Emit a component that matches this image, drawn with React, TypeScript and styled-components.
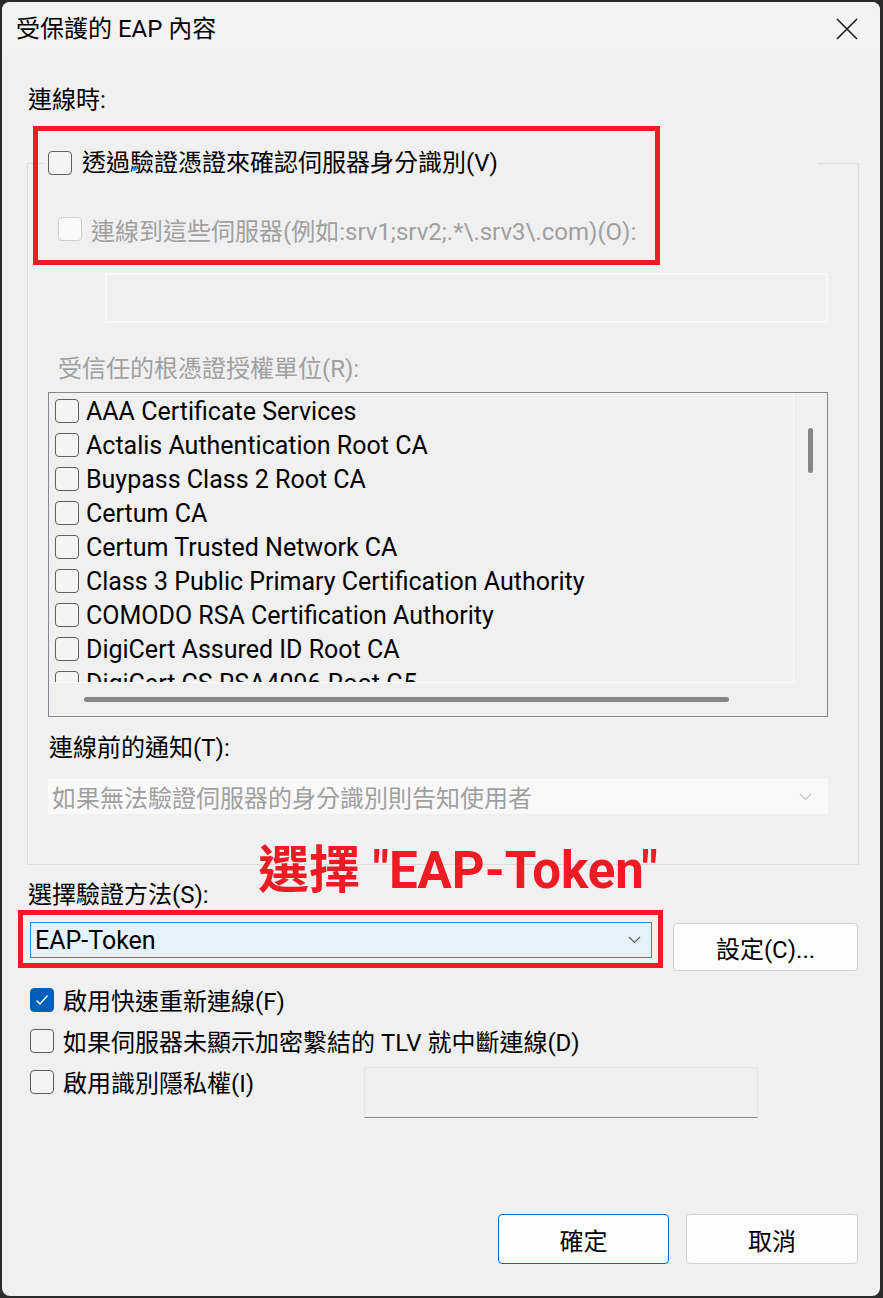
import React, { FC } from 'react'
import styled, { createGlobalStyle } from 'styled-components'

const GlobalStyle = createGlobalStyle`
    html, body {
        margin: 0;
        padding: 0;
        background: #2b2b2b;
    }
    * {
        box-sizing: border-box;
    }
`

const Frame = styled.div`
    position: relative;
    width: 883px;
    height: 1298px;
    padding: 2px 3px 2px 2px;
    background: #2b2b2b;
    font-family: Roboto, "Noto Sans CJK TC", sans-serif;
    font-size: 24px;
    color: #000;
`

const Window = styled.div`
    height: 100%;
    border-radius: 8px;
    background: #f0f0f0;
    overflow: hidden;
    display: flex;
    flex-direction: column;
`

const TitleBar = styled.div`
    flex: none;
    height: 53px;
    display: flex;
    align-items: center;
    justify-content: space-between;
    padding: 0 22px 0 14px;
    background: #f3f3f3;
`

const Title = styled.div`
    line-height: 34px;
`

const Body = styled.div`
    display: flex;
    flex-direction: column;
    padding: 0 21px 0 25px;
`

const Label = styled.div<{ $top?: number; $indent?: number; $disabled?: boolean }>`
    line-height: 34px;
    margin-top: ${p => p.$top ?? 0}px;
    padding-left: ${p => p.$indent ?? 0}px;
    color: ${p => (p.$disabled ? '#a0a0a0' : '#000')};
    white-space: nowrap;
`

const Group = styled.fieldset`
    margin: 32px 0 0;
    padding: 0 30px 50px 20px;
    border: 1px solid #dcdcdc;
    min-width: 0;
    display: flex;
    flex-direction: column;
`

const Legend = styled.legend`
    width: 773px;
    height: 28px;
    margin-left: -3px;
    padding: 0 3px;
    display: flex;
    align-items: center;
    gap: 10px;
    line-height: 28px;
    white-space: nowrap;
`

type BoxState = 'off' | 'on' | 'disabled'

const Box = styled.span<{ $state: BoxState }>`
    flex: none;
    width: 24px;
    height: 24px;
    border-radius: 4px;
    display: flex;
    align-items: center;
    justify-content: center;
    border: 1.5px solid ${p => (p.$state === 'on' ? '#005fb8' : p.$state === 'disabled' ? '#cdcdcd' : '#5f5f5f')};
    background: ${p => (p.$state === 'on' ? '#005fb8' : p.$state === 'disabled' ? '#fafafa' : '#f4f4f4')};
`

const CheckRow = styled.div<{ $height?: number; $gap?: number; $indent?: number; $top?: number; $disabled?: boolean }>`
    display: flex;
    align-items: center;
    height: ${p => p.$height ?? 34}px;
    gap: ${p => p.$gap ?? 9}px;
    margin-top: ${p => p.$top ?? 0}px;
    margin-left: ${p => p.$indent ?? 0}px;
    color: ${p => (p.$disabled ? '#a0a0a0' : '#000')};
    white-space: nowrap;
`

const ServerField = styled.div`
    margin: 27px 0 0 57px;
    height: 50px;
    border: 2px solid #f9f9f9;
    background: #f0f0f0;
`

const ListBox = styled.div`
    margin-top: 6px;
    height: 325px;
    border: 1px solid #828790;
    display: grid;
    grid-template-columns: 1fr 34px;
    grid-template-rows: 1fr 34px;
`

const Items = styled.div`
    overflow: hidden;
    padding: 1px 0 0 6px;
`

const ItemRow = styled.div`
    height: 34px;
    display: flex;
    align-items: center;
    gap: 7px;
    font-size: 25px;
    white-space: nowrap;
`

const VTrack = styled.div`
    border-left: 1px solid #fbfbfb;
    padding: 35px 0 0 14px;
`

const VThumb = styled.div`
    width: 5px;
    height: 45px;
    border-radius: 3px;
    background: #868686;
`

const HTrack = styled.div`
    border-top: 1px solid #fbfbfb;
    padding: 14px 0 0 35px;
`

const HThumb = styled.div`
    width: 645px;
    height: 5px;
    border-radius: 3px;
    background: #868686;
`

const Combo = styled.div<{ $active?: boolean }>`
    display: flex;
    align-items: center;
    justify-content: space-between;
    white-space: nowrap;
    ${p =>
        p.$active
            ? `
        width: 622px;
        height: 36px;
        padding: 0 10px 0 4px;
        border: 1px solid #2b87d9;
        background: #e5f1fb;
        font-size: 25px;
        color: #000;
    `
            : `
        margin-top: 14px;
        height: 35px;
        padding: 0 16px 0 4px;
        background: #f9f9f9;
        color: #a0a0a0;
    `}
`

const MethodRow = styled.div`
    margin: 10px 0 0 3px;
    display: flex;
    align-items: flex-start;
    gap: 21px;
`

const Button = styled.div<{ $primary?: boolean; $width: number; $height: number; $top?: number }>`
    flex: none;
    width: ${p => p.$width}px;
    height: ${p => p.$height}px;
    margin-top: ${p => p.$top ?? 0}px;
    display: flex;
    align-items: center;
    justify-content: center;
    border-radius: 4px;
    border: 1px solid ${p => (p.$primary ? '#0067c0' : '#d0d0d0')};
    background: #fdfdfd;
`

const Options = styled.div`
    margin: 8px 0 0 3px;
    display: flex;
    flex-direction: column;
`

const PrivacyRow = styled.div`
    display: grid;
    grid-template-columns: 334px 394px;
    align-items: start;
`

const PrivacyField = styled.div`
    margin-top: 6px;
    height: 51px;
    border: 1px solid #e4e4e4;
    border-bottom-color: #8a8a8a;
    background: #efefef;
`

const Footer = styled.div`
    margin-top: 96px;
    padding-right: 1px;
    display: flex;
    justify-content: flex-end;
    gap: 17px;
`

const Highlight = styled.div<{ $x: number; $y: number; $w: number; $h: number }>`
    position: absolute;
    left: ${p => p.$x}px;
    top: ${p => p.$y}px;
    width: ${p => p.$w}px;
    height: ${p => p.$h}px;
    border: 5px solid #ed1c24;
    pointer-events: none;
`

const Callout = styled.div`
    position: absolute;
    left: 258px;
    top: 845px;
    font-size: 51px;
    line-height: 51px;
    font-weight: bold;
    color: #ed1c24;
    white-space: nowrap;
`

const CloseIcon: FC = () => (
    <svg width="22" height="22" viewBox="0 0 22 22">
        <path d="M1 1 L21 21 M21 1 L1 21" stroke="#1b1b1b" strokeWidth="1.6" fill="none" />
    </svg>
)

const Chevron: FC<{ color: string }> = ({ color }) => (
    <svg width="13" height="8" viewBox="0 0 13 8">
        <path d="M1 1 L6.5 6.5 L12 1" stroke={color} strokeWidth="1.2" fill="none" />
    </svg>
)

const Check: FC<{ state?: BoxState }> = ({ state = 'off' }) => (
    <Box $state={state}>
        {state === 'on' && (
            <svg width="14" height="12" viewBox="0 0 14 12">
                <path d="M1.5 6.5 L5 10 L12.5 1.5" stroke="#fff" strokeWidth="1.4" fill="none" />
            </svg>
        )}
    </Box>
)

const authorities = [
    'AAA Certificate Services',
    'Actalis Authentication Root CA',
    'Buypass Class 2 Root CA',
    'Certum CA',
    'Certum Trusted Network CA',
    'Class 3 Public Primary Certification Authority',
    'COMODO RSA Certification Authority',
    'DigiCert Assured ID Root CA',
    'DigiCert CS RSA4096 Root G5',
]

const App: FC = () => {
    return (
        <Frame>
            <GlobalStyle />
            <Window>
                <TitleBar>
                    <Title>受保護的 EAP 內容</Title>
                    <CloseIcon />
                </TitleBar>
                <Body>
                    <Label $top={28} $indent={1}>連線時:</Label>
                    <Group>
                        <Legend>
                            <Check />
                            <span>透過驗證憑證來確認伺服器身分識別(V)</span>
                        </Legend>
                        <CheckRow $top={35} $indent={10} $disabled>
                            <Check state='disabled' />
                            <span>連線到這些伺服器(例如:srv1;srv2;.*\.srv3\.com)(O):</span>
                        </CheckRow>
                        <ServerField />
                        <Label $top={29} $indent={10} $disabled>受信任的根憑證授權單位(R):</Label>
                        <ListBox>
                            <Items>
                                {authorities.map(name => (
                                    <ItemRow key={name}>
                                        <Check />
                                        <span>{name}</span>
                                    </ItemRow>
                                ))}
                            </Items>
                            <VTrack>
                                <VThumb />
                            </VTrack>
                            <HTrack>
                                <HThumb />
                            </HTrack>
                            <div />
                        </ListBox>
                        <Label $top={14} $indent={1}>連線前的通知(T):</Label>
                        <Combo>
                            <span>如果無法驗證伺服器的身分識別則告知使用者</span>
                            <Chevron color='#c4c4c4' />
                        </Combo>
                    </Group>
                    <Label $top={13} $indent={1}>選擇驗證方法(S):</Label>
                    <MethodRow>
                        <Combo $active>
                            <span>EAP-Token</span>
                            <Chevron color='#5f5f5f' />
                        </Combo>
                        <Button $width={185} $height={48} $top={1}>設定(C)...</Button>
                    </MethodRow>
                    <Options>
                        <CheckRow $height={41}>
                            <Check state='on' />
                            <span>啟用快速重新連線(F)</span>
                        </CheckRow>
                        <CheckRow $height={41}>
                            <Check />
                            <span>如果伺服器未顯示加密繫結的 TLV 就中斷連線(D)</span>
                        </CheckRow>
                        <PrivacyRow>
                            <CheckRow $height={41}>
                                <Check />
                                <span>啟用識別隱私權(I)</span>
                            </CheckRow>
                            <PrivacyField />
                        </PrivacyRow>
                    </Options>
                    <Footer>
                        <Button $primary $width={171} $height={50}>確定</Button>
                        <Button $width={172} $height={50}>取消</Button>
                    </Footer>
                </Body>
            </Window>
            <Highlight $x={33} $y={126} $w={627} $h={139} />
            <Highlight $x={18} $y={910} $w={645} $h={58} />
            <Callout>選擇 "EAP-Token"</Callout>
        </Frame>
    )
}

export default App
